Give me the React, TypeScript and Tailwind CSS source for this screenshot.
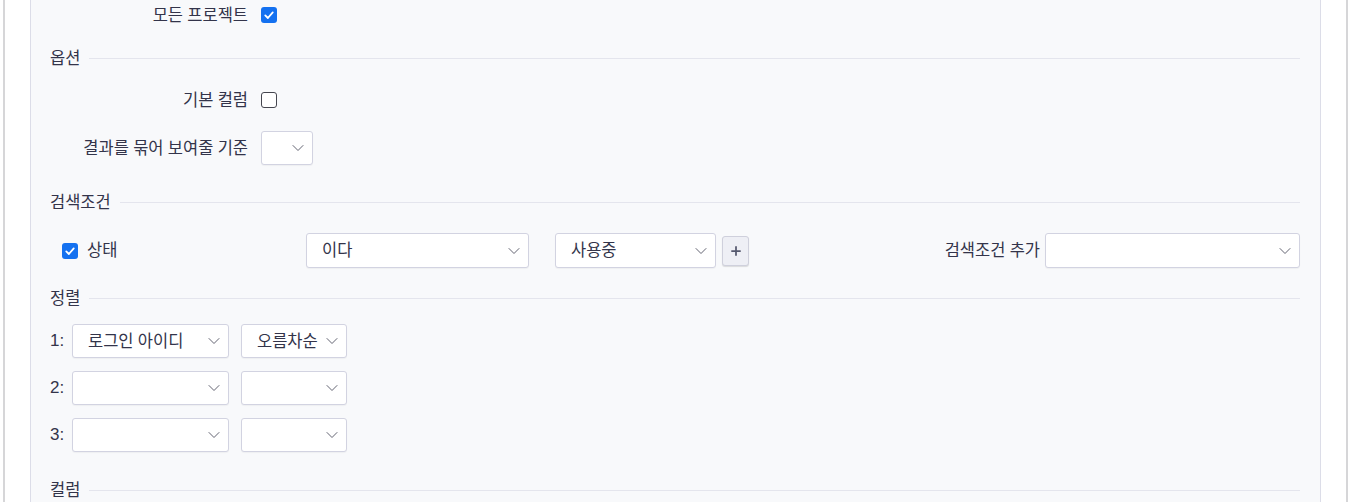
import { ChevronDown, Plus } from 'lucide-react'

const font = { fontFamily: '"Noto Sans", "Noto Sans CJK KR", sans-serif' }

function Checkbox({ checked }: { checked: boolean }) {
    if (checked) {
        return (
            <span className="w-4 h-4 rounded-[3px] bg-[#1471f0] flex items-center justify-center shrink-0">
                <svg viewBox="0 0 16 16" className="w-3 h-3">
                    <path d="M3 8.5 L6.5 12 L13 4.5" fill="none" stroke="white" strokeWidth="2.4" strokeLinecap="round" strokeLinejoin="round" />
                </svg>
            </span>
        )
    }
    return <span className="w-4 h-4 rounded-[3px] border-[1.5px] border-[#45464f] bg-white shrink-0" />
}

function Select({ value = '', className = '' }: { value?: string; className?: string }) {
    return (
        <div className={`h-full bg-white border border-[#d2d3e1] rounded-[3px] shadow-[0_1px_1px_rgba(0,0,0,0.04)] flex items-center pl-[15px] pr-[4px] ${className}`}>
            <span className="flex-1 text-[16.5px] text-[#33344a] truncate">{value}</span>
            <ChevronDown className="w-[20px] h-[20px] text-[#5c5d6c] shrink-0" strokeWidth={1.15} />
        </div>
    )
}

function Legend({ title, className = '' }: { title: string; className?: string }) {
    return (
        <div className={`h-[24px] flex items-center gap-[9px] ${className}`}>
            <span className="text-[16.5px] text-[#33344a]">{title}</span>
            <div className="flex-1 h-px bg-[#e4e5ed]" />
        </div>
    )
}

function LabelRow({ label, children, className = '' }: { label: string; children: React.ReactNode; className?: string }) {
    return (
        <div className={`flex items-center ${className}`}>
            <span className="w-[198px] text-right text-[16.5px] text-[#33344a]">{label}</span>
            <div className="ml-[13px] h-full flex items-center">{children}</div>
        </div>
    )
}

function SortRow({ n, field = '', order = '', className = '' }: { n: number; field?: string; order?: string; className?: string }) {
    return (
        <div className={`h-[34px] flex items-center ${className}`}>
            <span className="w-[22px] text-[17px] text-[#33344a]" style={{ fontFamily: '"Liberation Sans", sans-serif' }}>{n}:</span>
            <Select value={field} className="w-[157px]" />
            <Select value={order} className="w-[106px] ml-[12px]" />
        </div>
    )
}

export default function App() {
    return (
        <div className="w-[1351px] h-[502px] bg-white overflow-hidden flex" style={font}>
            <div className="w-[3px] shrink-0" />
            <div className="w-[2px] bg-[#d6d6d8] shrink-0" />
            <div className="w-[25px] shrink-0" />
            <div className="w-[1291px] shrink-0 bg-[#f8f9fb] border-x border-[#dcdde8] pl-[19px] pr-[20px]">
                <LabelRow label="모든 프로젝트" className="h-[30px]">
                    <Checkbox checked />
                </LabelRow>

                <Legend title="옵션" className="mt-[16px]" />
                <LabelRow label="기본 컬럼" className="h-[24px] mt-[18px]">
                    <Checkbox checked={false} />
                </LabelRow>
                <LabelRow label="결과를 묶어 보여줄 기준" className="h-[34px] mt-[19px]">
                    <Select className="w-[52px]" />
                </LabelRow>

                <Legend title="검색조건" className="mt-[25px]" />
                <div className="h-[35px] mt-[19px] flex items-center">
                    <div className="w-[256px] pl-[12px] flex items-center shrink-0">
                        <Checkbox checked />
                        <span className="ml-[9px] text-[16.5px] text-[#33344a]">상태</span>
                    </div>
                    <div className="h-full flex items-center">
                        <Select value="이다" className="w-[223px]" />
                        <Select value="사용중" className="w-[161px] ml-[26px]" />
                        <button className="ml-[6px] w-[27px] h-[30px] bg-[#eeeff5] border border-[#cfd0dc] rounded-[3px] shadow-[0_1px_1px_rgba(0,0,0,0.12)] flex items-center justify-center">
                            <Plus className="w-[14px] h-[14px] text-[#55586e]" strokeWidth={3} />
                        </button>
                    </div>
                    <div className="flex-1" />
                    <span className="text-[16.5px] text-[#33344a] mr-[5px]">검색조건 추가</span>
                    <Select className="w-[255px]" />
                </div>

                <Legend title="정렬" className="mt-[18px]" />
                <SortRow n={1} field="로그인 아이디" order="오름차순" className="mt-[14px]" />
                <SortRow n={2} className="mt-[13px]" />
                <SortRow n={3} className="mt-[13px]" />

                <Legend title="컬럼" className="mt-[26px]" />
            </div>
            <div className="w-[25px] shrink-0" />
            <div className="w-[2px] bg-[#d6d6d8] shrink-0" />
        </div>
    )
}
